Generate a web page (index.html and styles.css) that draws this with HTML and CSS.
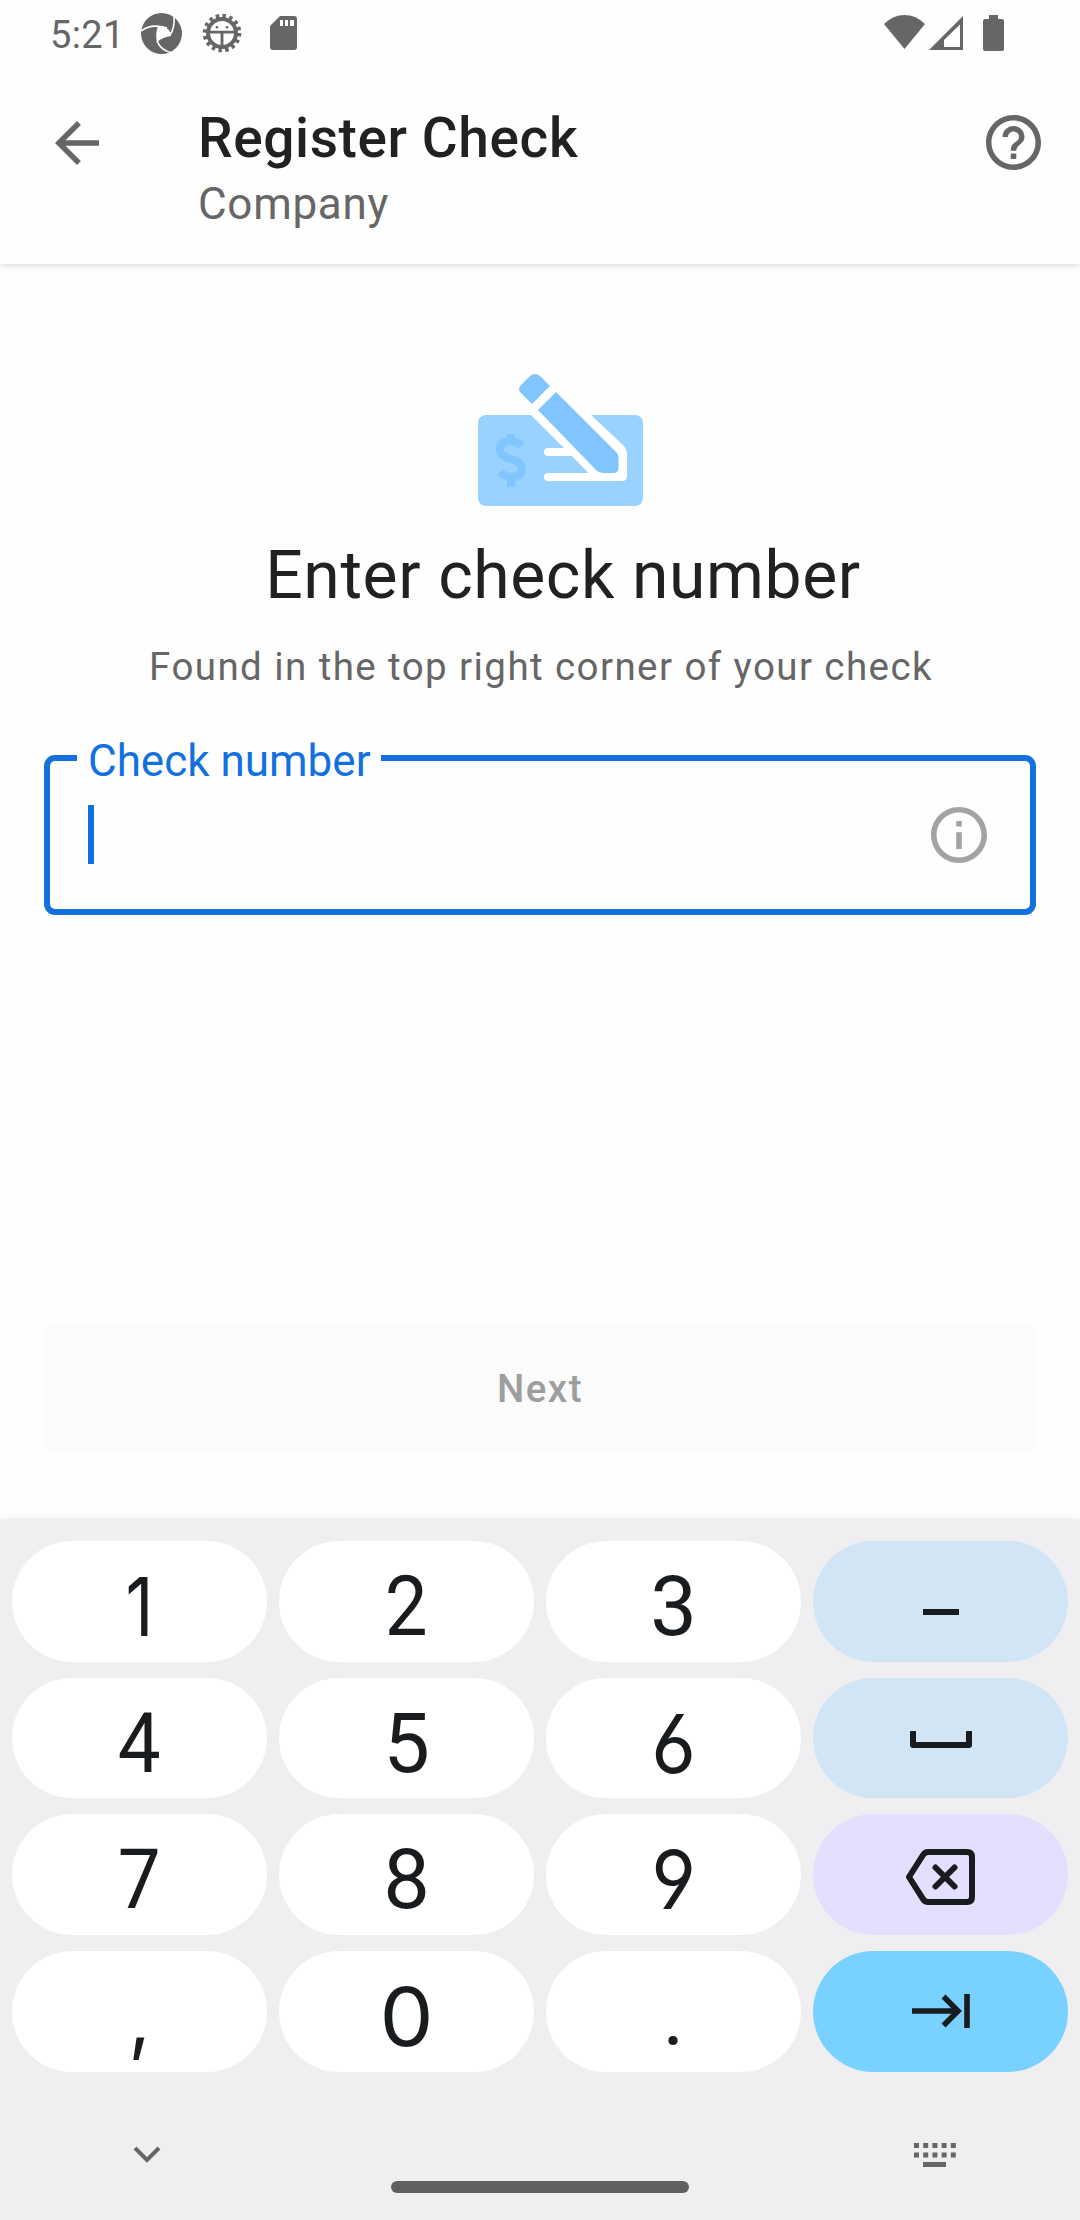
FILE: index.html
```html
<!DOCTYPE html>
<html lang="en">
<head>
<meta charset="utf-8">
<title>Register Check</title>
<link rel="stylesheet" href="styles.css">
</head>
<body>
<div class="screen">
  <div class="status">
    <span class="clock">5:21</span>
    <svg class="st-swirl" viewBox="0 0 42 42"><circle cx="20.5" cy="20.5" r="20.5" fill="#666"/><path d="M17 13Q24 13 28 17Q30 20 30 23Q22 24 16 29Q14 21 17 13z" fill="#fff"/><g fill="none" stroke="#fff" stroke-width="1.6"><path d="M0 18Q10 10 26 15"/><path d="M33 3Q34 15 29 22"/><path d="M16 28Q20 38 32 40"/></g></svg>
    <svg class="st-gear" viewBox="0 0 40 40"><circle cx="20" cy="20" r="16.8" fill="none" stroke="#666" stroke-width="5" stroke-dasharray="3.3 3.298"/><circle cx="20" cy="20" r="14" fill="none" stroke="#666" stroke-width="4"/><path d="M6 19.2h28M20 20v13" stroke="#666" stroke-width="2.800"/><circle cx="15" cy="14.300" r="1.300" fill="#666"/><circle cx="25" cy="14.300" r="1.300" fill="#666"/></svg>
    <svg class="st-sd" viewBox="0 0 27 34"><path d="M10 0H24a3 3 0 0 1 3 3V31a3 3 0 0 1-3 3H3a3 3 0 0 1-3-3V10z" fill="#666"/><path d="M10 4h3v6h-3zM15 4h3v6h-3zM20 4h4v6h-4z" fill="#fff"/></svg>
    <span class="grow"></span>
    <svg class="st-wifi" viewBox="0 0 41 34"><path d="M0 9Q9 0 20.500 0T41 9L20.500 34z" fill="#666"/></svg>
    <svg class="st-cell" viewBox="0 0 34 34"><path fill-rule="evenodd" d="M34 0V34H0zM31 8.500L15 24V31H31z" fill="#666"/></svg>
    <svg class="st-batt" viewBox="0 0 21 36"><path d="M6 0h9v4h4a2 2 0 0 1 2 2v28a2 2 0 0 1-2 2H2a2 2 0 0 1-2-2V6a2 2 0 0 1 2-2h4z" fill="#666"/></svg>
  </div>
  <header class="appbar">
    <svg class="back" viewBox="4 4 16 16"><path fill="#666" d="M20 11H7.830l5.590-5.590L12 4l-8 8 8 8 1.410-1.410L7.830 13H20v-2z"/></svg>
    <div class="titles"><h1>Register Check</h1><p>Company</p></div>
    <svg class="help" viewBox="2 2 20 20"><path fill="#666" d="M11 18h2v-2h-2v2zm1-16C6.480 2 2 6.480 2 12s4.480 10 10 10 10-4.480 10-10S17.520 2 12 2zm0 18c-4.410 0-8-3.590-8-8s3.590-8 8-8 8 3.590 8 8-3.590 8-8 8zm0-14c-2.210 0-4 1.790-4 4h2c0-1.100.9-2 2-2s2 .9 2 2c0 2-3 1.750-3 5h2c0-2.250 3-2.500 3-5 0-2.210-1.790-4-4-4z"/></svg>
  </header>
  <main class="content">
    <svg class="art" viewBox="0 0 166 133">
      <rect x="0" y="42" width="165" height="91" rx="8" fill="#99d1ff"/>
      <path d="M53 42L86 75H70Q66 75 66 79T70 83H94L110.500 100H70Q66 100 66 104T70 108H144Q149 108 149 103V81Q149 76 145 72L113 42L80 22L52 36z" fill="#fff"/>
      <path d="M60 37L78 19L137 78Q140.500 81 140.500 85V95Q140.500 100 135 100H125Q121 100 118 97z" fill="#80c5ff"/>
      <path d="M54 31L43 20Q39 16 43 12L52 3Q57-1 62 3L72 13z" fill="#80c5ff"/>
      <path d="M43 73Q39 68 33 68Q22 68 22 77Q22 83 33 86Q44 89 44 96Q44 104 33 104Q27 104 22 99M33 61v8M33 103v11" fill="none" stroke="#80c5ff" stroke-width="8"/>
    </svg>
    <h2>Enter check number</h2>
    <p class="hint">Found in the top right corner of your check</p>
    <div class="field">
      <label class="label">Check number</label>
      <span class="caret"></span>
      <svg class="info" viewBox="2 2 20 20"><path fill="#a3a3a3" d="M11 7h2v2h-2zm0 4h2v6h-2zm1-9C6.480 2 2 6.480 2 12s4.480 10 10 10 10-4.480 10-10S17.520 2 12 2zm0 18c-4.410 0-8-3.590-8-8s3.590-8 8-8 8 3.590 8 8-3.590 8-8 8z"/></svg>
    </div>
    <button class="next">Next</button>
  </main>
  <section class="keyboard">
    <div class="keys">
      <div class="key"><span class="alt one">1</span></div><div class="key"><span class="narrow">2</span></div><div class="key"><span>3</span></div>
      <div class="key blue"><svg class="k-dash" viewBox="0 0 36 6"><path d="M0 0h36v6H0z"/></svg></div>
      <div class="key"><span class="narrow">4</span></div><div class="key"><span>5</span></div><div class="key"><span class="alt">6</span></div>
      <div class="key blue"><svg class="k-space" viewBox="0 0 62 17"><path d="M3 1.500V14H59V1.500" fill="none" stroke="#191c1e" stroke-width="6" stroke-linecap="round" stroke-linejoin="round"/></svg></div>
      <div class="key"><span class="narrow">7</span></div><div class="key"><span>8</span></div><div class="key"><span class="alt">9</span></div>
      <div class="key violet"><svg class="k-del" viewBox="0 0 70 56"><g fill="none" stroke="#191c1e" stroke-width="6" stroke-linejoin="round" stroke-linecap="round"><path d="M3 28L17 6Q19 3 22 3H61Q66 3 66 8V48Q66 53 61 53H22Q19 53 17 50z"/><path d="M29.500 18.500l19 19M48.500 18.500l-19 19"/></g></svg></div>
      <div class="key"><span class="alt">,</span></div><div class="key"><span class="alt zero">0</span></div><div class="key"><span>.</span></div>
      <div class="key cyan"><svg class="k-tab" viewBox="0 0 58 34"><path d="M0 17H47M31.500 2.500L46 17L31.500 31.500M55 0V34" fill="none" stroke="#191c1e" stroke-width="5.600"/></svg></div>
    </div>
    <div class="navbar">
      <svg class="n-down" viewBox="0 0 28 18"><path d="M2 2L14 14L26 2" fill="none" stroke="#666" stroke-width="4"/></svg>
      <span class="home"></span>
      <svg class="n-kb" viewBox="0 0 42 24"><path d="M0 2.500h42M0 12h42" stroke="#666" stroke-width="5" stroke-dasharray="5 4.200"/><path d="M9 21.500h23" stroke="#666" stroke-width="5"/></svg>
    </div>
  </section>
</div>
</body>
</html>
```
FILE: styles.css
```css
* { box-sizing: border-box; }
body { margin: 0; background: #fff; font-family: Roboto, sans-serif; }
h1, h2, p { margin: 0; font-weight: 400; white-space: nowrap; }
svg { display: block; flex: none; }
.screen { width: 1080px; height: 2220px; display: flex; flex-direction: column; background: #fefefe; overflow: hidden; }
.status { position: relative; z-index: 1; background: #fefefe; height: 66px; display: flex; align-items: flex-start; padding: 13px 76px 0 50px; }
.clock { width: 91px; font-size: 38px; line-height: 44px; color: #666; letter-spacing: .4px; }
.grow { flex: 1; }
.st-swirl { width: 42px; height: 42px; }
.st-gear { width: 40px; height: 40px; margin: 0 0 0 19px; }
.st-sd { width: 27px; height: 34px; margin: 3px 0 0 28px; }
.st-wifi { width: 41px; height: 34px; margin-top: 2px; }
.st-cell { width: 34px; height: 34px; margin: 3px 0 0 4px; }
.st-batt { width: 21px; height: 36px; margin: 2px 0 0 20px; }
.appbar { height: 198px; display: flex; align-items: flex-start; padding: 0 39px 0 55px; box-shadow: 0 2px 6px rgba(0,0,0,.14); }
.back { width: 44px; height: 44px; margin-top: 55px; }
.titles { flex: 1; padding: 40px 0 0 99px; }
.titles h1 { font-size: 55px; line-height: 64px; font-weight: 500; color: #212121; letter-spacing: .6px; }
.titles p { font-size: 44px; line-height: 52px; margin-top: 8px; color: #666; letter-spacing: .7px; }
.help { width: 55px; height: 55px; margin-top: 49px; }
.content { height: 1255px; display: flex; flex-direction: column; align-items: center; padding: 109px 44px 0; }
.art { width: 166px; height: 133px; margin-left: 42px; overflow: visible; }
h2 { margin: 32px 0 0 46px; font-size: 66px; line-height: 76px; color: #212121; letter-spacing: .6px; }
.hint { margin: 31px 0 0 2px; font-size: 38.500px; line-height: 44px; color: #666; letter-spacing: 1.420px; }
.field { position: relative; width: 992px; height: 160px; margin-top: 66px; border: 6px solid #1371de; border-radius: 11px; display: flex; align-items: center; justify-content: space-between; padding: 0 43px 0 38px; }
.label { position: absolute; left: 27px; top: -26px; width: 304px; padding-left: 11px; background: #fefefe; color: #1371de; font-size: 44px; line-height: 52px; white-space: nowrap; }
.caret { width: 6px; height: 59px; margin-bottom: 1px; background: #1371de; }
.info { width: 56px; height: 56px; }
.next { width: 992px; height: 131px; margin-top: 407px; padding: 2px 0 0; border: 0; border-radius: 10px; background: #fbfbfb; color: #9e9e9e; font: 500 38.500px/44px Roboto, sans-serif; letter-spacing: 1.500px; }
.keyboard { flex: 1; background: #efeff1; padding: 22px 12px 0; box-shadow: 0 0 9px rgba(0,0,0,.08); }
.keys { display: grid; grid-template-columns: repeat(4, 255px); grid-auto-rows: 120.700px; gap: 16px 12px; }
.key { border-radius: 61px; background: #fff; display: flex; align-items: center; justify-content: center; color: #191c1e; fill: #191c1e; font-size: 83px; line-height: 100px; }
.key span { margin-top: 11px; }
.key .narrow { transform: scaleX(.92); }
.key .alt { font-family: Inter, sans-serif; font-size: 81px; font-feature-settings: "cv03", "cv04"; transform: scaleX(.95); }
.key .one { transform: scaleX(.85); }
.key .zero { transform: scaleX(1.06); }
.blue { background: #d2e5f5; }
.violet { background: #e4deff; }
.cyan { background: #78d1ff; }
.k-dash { width: 36px; height: 6px; margin-top: 22px; }
.k-space { width: 62px; height: 17px; margin-top: 3px; }
.k-del { width: 70px; height: 56px; margin-top: 5px; }
.k-tab { width: 58px; height: 34px; }
.navbar { display: flex; justify-content: space-between; padding: 74px 112px 0 121px; }
.n-down { width: 28px; height: 18px; }
.home { width: 298px; height: 12px; border-radius: 6px; background: #606060; margin: 35px 0 0 5px; }
.n-kb { width: 42px; height: 24px; margin-top: -3px; }
```
